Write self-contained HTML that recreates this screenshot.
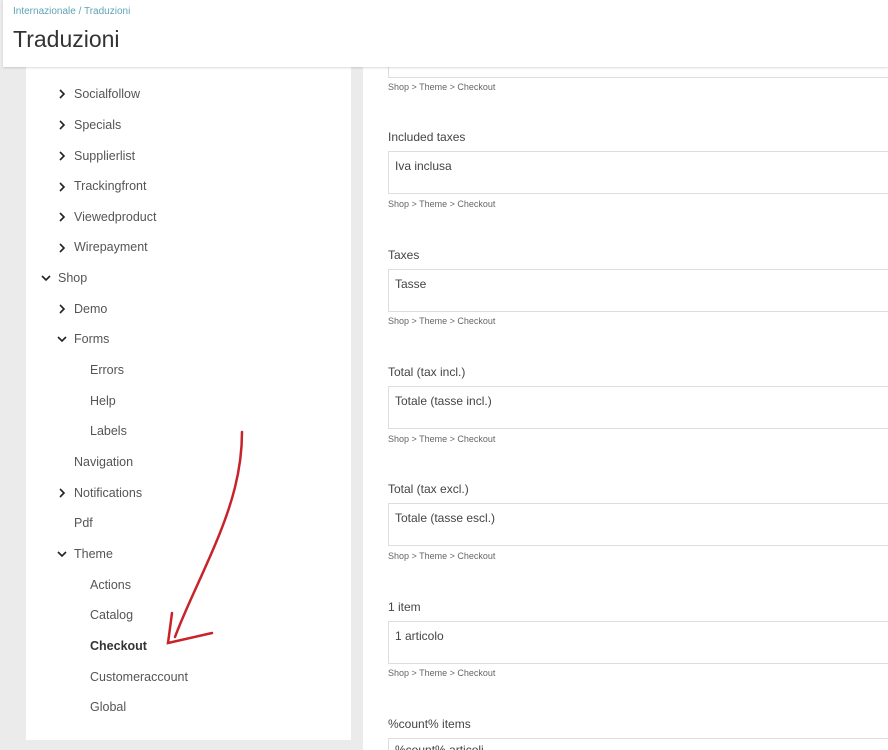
<!DOCTYPE html>
<html style="overflow:hidden;height:750px"><head><meta charset="utf-8"><style>
body{margin:0;width:888px;height:750px;background:#ebebeb;font-family:"Liberation Sans",sans-serif;position:relative;overflow:hidden}
.hdr{position:absolute;left:3px;top:0;width:885px;height:67px;background:#fff;box-shadow:0 1px 2px rgba(0,0,0,.15);z-index:5}
.bc{position:absolute;left:10px;top:6px;font-size:10px;color:#5fa3b5}
.tt{position:absolute;left:10px;top:26px;font-size:23px;color:#333}
.left{position:absolute;left:26px;top:40px;width:325px;height:700px;background:#fff}
.right{position:absolute;left:363px;top:40px;width:525px;height:710px;background:#fff}
.it{position:absolute;font-size:12.5px;color:#555}
.lb{position:absolute;left:388px;font-size:12px;color:#444}
.bx{position:absolute;left:388px;width:510px;height:43px;border:1px solid #ddd;box-sizing:border-box;font-size:12px;color:#444;padding:7px 6px}
.cr{position:absolute;left:388px;font-size:9px;color:#666}
</style></head><body>
<div class="left"></div><div class="right"></div>
<div class="hdr"><div class="bc">Internazionale / Traduzioni</div><div class="tt">Traduzioni</div></div>
<svg style="position:absolute;left:0;top:0" width="888" height="750">
<g fill="none" stroke="#222" stroke-width="1.6">
<path d="M60 90l4 4-4 4M60 121l4 4-4 4M60 152l4 4-4 4M60 183l4 4-4 4M60 213l4 4-4 4M60 244l4 4-4 4M60 305l4 4-4 4M60 489l4 4-4 4"/>
<path d="M42 276l4 4 4-4M58 337l4 4 4-4M58 552l4 4 4-4"/>
</g>
<g fill="none" stroke="#c8232a" stroke-width="2.5" stroke-linecap="round">
<path d="M242 432C242 470 232 505 215 545S185 610 175 637"/>
<path d="M172 613L168 643L212 633"/>
</g>
</svg>
<div class="it" style="left:74px;top:87px">Socialfollow</div>
<div class="it" style="left:74px;top:118px">Specials</div>
<div class="it" style="left:74px;top:149px">Supplierlist</div>
<div class="it" style="left:74px;top:179px">Trackingfront</div>
<div class="it" style="left:74px;top:210px">Viewedproduct</div>
<div class="it" style="left:74px;top:240px">Wirepayment</div>
<div class="it" style="left:58px;top:271px">Shop</div>
<div class="it" style="left:74px;top:302px">Demo</div>
<div class="it" style="left:74px;top:332px">Forms</div>
<div class="it" style="left:90px;top:363px">Errors</div>
<div class="it" style="left:90px;top:394px">Help</div>
<div class="it" style="left:90px;top:424px">Labels</div>
<div class="it" style="left:74px;top:455px">Navigation</div>
<div class="it" style="left:74px;top:486px">Notifications</div>
<div class="it" style="left:74px;top:516px">Pdf</div>
<div class="it" style="left:74px;top:547px">Theme</div>
<div class="it" style="left:90px;top:578px">Actions</div>
<div class="it" style="left:90px;top:608px">Catalog</div>
<div class="it" style="left:90px;top:639px;font-weight:bold;color:#333">Checkout</div>
<div class="it" style="left:90px;top:670px">Customeraccount</div>
<div class="it" style="left:90px;top:700px">Global</div>

<div class="bx" style="top:35px"></div><div class="cr" style="top:82px">Shop &gt; Theme &gt; Checkout</div>
<div class="lb" style="top:130px">Included taxes</div><div class="bx" style="top:151px">Iva inclusa</div><div class="cr" style="top:199px">Shop &gt; Theme &gt; Checkout</div>
<div class="lb" style="top:248px">Taxes</div><div class="bx" style="top:269px">Tasse</div><div class="cr" style="top:316px">Shop &gt; Theme &gt; Checkout</div>
<div class="lb" style="top:365px">Total (tax incl.)</div><div class="bx" style="top:386px">Totale (tasse incl.)</div><div class="cr" style="top:434px">Shop &gt; Theme &gt; Checkout</div>
<div class="lb" style="top:482px">Total (tax excl.)</div><div class="bx" style="top:503px">Totale (tasse escl.)</div><div class="cr" style="top:551px">Shop &gt; Theme &gt; Checkout</div>
<div class="lb" style="top:600px">1 item</div><div class="bx" style="top:621px">1 articolo</div><div class="cr" style="top:668px">Shop &gt; Theme &gt; Checkout</div>
<div class="lb" style="top:717px">%count% items</div><div class="bx" style="top:738px;height:12px;padding-top:4px">%count% articoli</div>
</body></html>
